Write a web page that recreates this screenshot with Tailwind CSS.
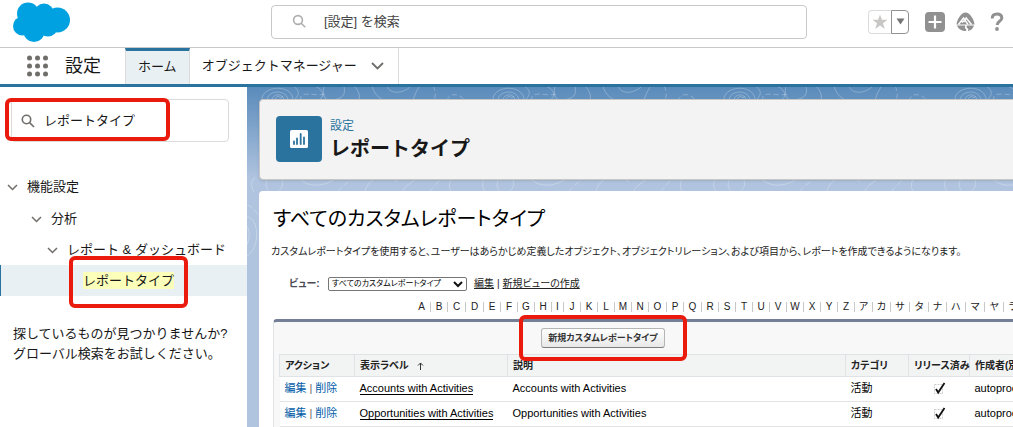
<!DOCTYPE html>
<html lang="ja">
<head>
<meta charset="utf-8">
<meta name="viewport" content="width=device-width, initial-scale=1">
<title>レポートタイプ | Salesforce</title>
<script src="https://cdn.jsdelivr.net/npm/@tailwindcss/browser@4"></script>
</head>
<body class="flex h-screen flex-col overflow-hidden bg-white font-['Liberation_Sans','Noto_Sans_CJK_JP',sans-serif] text-[13px] leading-5 text-[#181818]">

<header class="flex h-12 shrink-0 items-center border-b border-[#c9c9c9]">
  <a href="#" aria-label="Salesforce" class="w-[271px] shrink-0 pl-3">
    <svg class="block" width="60" height="44" viewBox="0 0 60 44" fill="#00a1e0"><circle cx="16" cy="11.500" r="11"/><circle cx="32" cy="11.500" r="10"/><circle cx="45.500" cy="18" r="12.500"/><circle cx="10.500" cy="24" r="9.500"/><circle cx="22" cy="29.500" r="10.500"/><circle cx="36" cy="24.500" r="10"/><path d="M10 12h35v18H14z"/></svg>
  </a>
  <label class="mb-1 flex h-[34px] min-w-0 flex-1 items-center rounded border border-[#c9c9c9] pl-5">
    <svg class="shrink-0" width="15" height="15" viewBox="0 0 15 15" fill="none" stroke="#aeaeae" stroke-width="1.600"><circle cx="6" cy="6" r="4.400"/><path d="M9.200 9.200l4 4"/></svg>
    <input type="search" aria-label="[設定] を検索" placeholder="[設定] を検索" class="ml-[17px] min-w-0 flex-1 bg-transparent outline-none placeholder:text-[#444]">
  </label>
  <div class="mb-1 flex w-[206px] shrink-0 items-center pl-[61px]">
    <button aria-label="お気に入り" class="flex h-6 w-[23px] items-center justify-center rounded-l border border-r-0 border-[#dddbda]"><svg width="16" height="16" viewBox="0 0 16 16" fill="#c9c7c5"><path d="M8 0.500l1.900 5.300h5.600l-4.500 3.500 1.700 5.700L8 11.600 3.300 15 5 9.300 0.500 5.800h5.600z"/></svg></button>
    <button aria-label="お気に入りリスト" class="flex h-6 w-[18px] items-center justify-center rounded-r border border-[#919191]"><svg width="9" height="7" viewBox="0 0 9 7" fill="#747474"><path d="M0.500 0.500h8L4.500 6.500z"/></svg></button>
    <button aria-label="作成" class="ml-4 flex size-5 items-center justify-center rounded bg-[#919191]"><svg width="14" height="14" viewBox="0 0 14 14" stroke="#fff" stroke-width="2.200"><path d="M7 0.500v13M0.500 7h13"/></svg></button>
    <button aria-label="Trailhead" class="ml-[11px]"><svg class="block" width="19" height="20" viewBox="0 0 19 20"><path fill="#919191" d="M9.500 0.500C13.500 0.500 18 7 18.500 12.500H0.500C1 7 5.500 0.500 9.500 0.500z"/><path fill="none" stroke="#fff" stroke-width="1.400" d="M2.500 12.500l5-6.500 4.500 6.500M8.800 8l1.400-2L15.500 12.500M5.500 9l1 1 1-1 1 1"/><path fill="#919191" d="M1 13.500h8.300l-0.500 2.500 1.500 1.500-.300 1.500C6 19 2.500 17.500 1 13.500zM10.800 13.500H18c-1 3-3 5-6 5.500l.300-2-1.800-1.700z"/></svg></button>
    <button aria-label="ヘルプ" class="ml-[15px]"><svg class="block" width="14" height="20" viewBox="0 0 14 20"><path fill="none" stroke="#919191" stroke-width="3" d="M2.200 6.500C2.200 3.500 4.200 2 7 2s4.800 1.500 4.800 4c0 3.500-4.600 3.200-4.600 7"/><circle cx="7" cy="17" r="1.900" fill="#919191"/></svg></button>
  </div>
</header>

<nav class="flex h-[39px] shrink-0 border-b-3 border-[#2a739e]">
  <button aria-label="アプリケーションランチャー" class="ml-[26px] mr-[17px] self-center"><svg class="block" width="22" height="22" viewBox="0 0 22 22" fill="#706e6b"><circle cx="3.500" cy="3" r="2.500"/><circle cx="11.500" cy="3" r="2.500"/><circle cx="19.500" cy="3" r="2.500"/><circle cx="3.500" cy="11" r="2.500"/><circle cx="11.500" cy="11" r="2.500"/><circle cx="19.500" cy="11" r="2.500"/><circle cx="3.500" cy="19" r="2.500"/><circle cx="11.500" cy="19" r="2.500"/><circle cx="19.500" cy="19" r="2.500"/></svg></button>
  <span class="w-[60px] self-center text-lg leading-6">設定</span>
  <a href="#" class="flex items-center border-x border-t-3 border-x-[#dddbda] border-t-[#2a739e] bg-[#e9f0f4] px-3 pb-[2px]">ホーム</a>
  <a href="#" class="flex items-center gap-[14px] border-r border-[#dddbda] pl-3 pr-[14px]">オブジェクトマネージャー
    <svg width="13" height="8" viewBox="0 0 13 8" fill="none" stroke="#706e6b" stroke-width="1.800"><path d="M1 1l5.500 5.500L12 1"/></svg></a>
</nav>

<div class="flex min-h-0 flex-1">
  <aside class="w-[247px] shrink-0 bg-white pt-3">
    <div class="relative ml-[11px] mr-[18px]">
      <label class="flex h-[43px] items-center rounded border border-[#dddbda] pl-[9px]">
        <svg class="shrink-0" width="14" height="14" viewBox="0 0 14 14" fill="none" stroke="#706e6b" stroke-width="1.600"><circle cx="5.500" cy="5.500" r="4.200"/><path d="M8.600 8.600l4.400 4.400"/></svg>
        <input type="text" aria-label="クイック検索" value="レポートタイプ" class="ml-[9px] min-w-0 flex-1 bg-transparent outline-none">
      </label>
      <div class="pointer-events-none absolute -left-[6px] -top-px h-[43px] w-[165px] rounded-md border-4 border-[#ea1b0c]"></div>
    </div>
    <ul class="mt-[29px]">
      <li><button class="flex h-8 items-center gap-[9px] pl-[7px]"><svg width="11" height="7" viewBox="0 0 11 7" fill="none" stroke="#706e6b" stroke-width="1.500"><path d="M1 1l4.500 4.500L10 1"/></svg>機能設定</button></li>
      <li><button class="flex h-8 items-center gap-[9px] pl-[31px]"><svg width="11" height="7" viewBox="0 0 11 7" fill="none" stroke="#706e6b" stroke-width="1.500"><path d="M1 1l4.500 4.500L10 1"/></svg>分析</button></li>
      <li><button class="flex h-[30px] items-center gap-[9px] pl-[47px]"><svg width="11" height="7" viewBox="0 0 11 7" fill="none" stroke="#706e6b" stroke-width="1.500"><path d="M1 1l4.500 4.500L10 1"/></svg>レポート &amp; ダッシュボード</button></li>
      <li class="relative flex h-[31px] items-center border-l border-[#2a739e] bg-[#e9f0f4]"><a href="#" class="ml-[82px] bg-[#fbffb9] leading-[17px]">レポートタイプ</a>
        <div class="pointer-events-none absolute -top-[9px] left-[68px] h-[52px] w-[119px] rounded-md border-4 border-[#ea1b0c]"></div></li>
    </ul>
    <p class="mt-7 pl-[13px]">探しているものが見つかりませんか?<br>グローバル検索をお試しください。</p>
  </aside>

  <main class="relative min-w-0 flex-1 overflow-hidden bg-[#b0c4df] pl-3 pt-3">
    <svg class="absolute left-0 top-0 h-full w-full" aria-hidden="true">
      <defs>
        <linearGradient id="sky" x2="0" y2="1"><stop stop-color="#5a8bbb"/><stop offset="1" stop-color="#b0c4df"/></linearGradient>
        <pattern id="topo" width="231" height="190" patternUnits="userSpaceOnUse">
          <g fill="none" stroke="#fff" stroke-opacity="0.250">
            <path d="M15 14C13-2 47-4 46 14M20 14C20 2 41 2 41 14M25 13c1-7 11-7 12 0M28 12l3-3 3 2 2-2M46-1c8 5 6 10 0 15M67-1c10 3 11 11 5 14M77-1c-2 8 0 16 9 14s13-4 11-14M107-1q7 7 5 14M125-1q2 9 11 14M140-1c3 9 17 8 25-1M172 0q-4 6-6 13"/>
            <path stroke-dasharray="5 3" d="M54 14c-3-12 14-4 25-7M186-1q4 7 1 14M200 14c2-9 13-8 18 0"/>
            <path d="M7 105c-5-9-1-12 1-15M22 105c-6-9-1-12 0-15M30 105c7-4 7-10 3-15M51 90c8 10 23 11 37 2M118 105c2-14 20-20 33-10M155 105c3-7 14-12 16-15M205 105c-5-5-2-12 1-15M-5 130c20-6 19 40 0 40M-5 138c10-4 9 23 0 23"/>
            <path stroke-dasharray="6 3" d="M90 105q10-10 17-15M182 105q7-8 14-15M0 118c12 4 18 19 16 52"/>
          </g>
        </pattern>
      </defs>
      <rect width="100%" height="92" fill="url(#sky)"/>
      <rect width="100%" height="190" fill="url(#topo)"/>
    </svg>

    <div class="relative -mr-2 flex h-[81px] items-center rounded border border-[#c9c7c5] bg-[#f3f3f3] pl-4 shadow">
      <div class="mb-px flex size-[46px] items-center justify-center rounded bg-[#2a739e]">
        <svg width="18" height="18" viewBox="0 0 18 18"><rect width="18" height="18" rx="1.500" fill="#fff"/><path stroke="#2a739e" stroke-width="1.800" stroke-linecap="round" d="M4 11.500v2.500M7 8.500v5.500M10.700 4v10M14 7.500v6.500"/></svg>
      </div>
      <div class="ml-2">
        <p class="pt-px text-[12px] leading-4 text-[#2a739e]">設定</p>
        <h1 class="pt-px text-xl leading-7 font-bold">レポートタイプ</h1>
      </div>
    </div>

    <section class="relative -mr-2 mt-[11px] min-h-full rounded bg-white pl-[14px] text-[11px] leading-4 text-[#222] [font-feature-settings:'palt']">
      <h2 class="pt-3 text-[20px] leading-8 text-black">すべてのカスタムレポートタイプ</h2>
      <p class="-ml-[2px] mt-[9px] whitespace-nowrap text-[10px]">カスタムレポートタイプを使用すると、ユーザーはあらかじめ定義したオブジェクト、オブジェクトリレーション、および項目から、レポートを作成できるようになります。</p>
      <div class="mt-4 flex h-4 items-center pl-4 text-[10px] whitespace-nowrap">
        <label for="view" class="w-[39px] font-bold text-[#4a4a56]">ビュー:</label>
        <div class="relative">
          <select id="view" class="block h-[14px] w-[139px] appearance-none rounded-[2px] border border-[#767676] bg-white pl-[3px] text-[8px] leading-3 text-black [font-feature-settings:'palt']"><option>すべてのカスタムレポートタイプ</option></select>
          <svg class="pointer-events-none absolute right-1 top-1" width="10" height="7" viewBox="0 0 10 7" fill="none" stroke="#111" stroke-width="2"><path d="M1 1l4 4 4-4"/></svg>
        </div>
        <a href="#" class="ml-[7px] underline">編集</a><span class="mx-[3px]">|</span><a href="#" class="underline">新規ビューの作成</a>
      </div>
      <div class="mt-[10px] flex h-[10px] pl-[140px] text-center text-[10px] leading-[10px] [&>a]:shrink-0 [&>a]:border-r [&>a]:border-[#c8c8c8]">
        <a href="#" class="w-[18px]">A</a><a href="#" class="w-[17px]">B</a><a href="#" class="w-[18px]">C</a><a href="#" class="w-[18px]">D</a><a href="#" class="w-[17px]">E</a><a href="#" class="w-[17px]">F</a><a href="#" class="w-[17px]">G</a><a href="#" class="w-[17px]">H</a><a href="#" class="w-[12px]">I</a><a href="#" class="w-[17px]">J</a><a href="#" class="w-[17px]">K</a><a href="#" class="w-[17px]">L</a><a href="#" class="w-[17px]">M</a><a href="#" class="w-[17px]">N</a><a href="#" class="w-[18px]">O</a><a href="#" class="w-[17px]">P</a><a href="#" class="w-[18px]">Q</a><a href="#" class="w-[17px]">R</a><a href="#" class="w-[17px]">S</a><a href="#" class="w-[17px]">T</a><a href="#" class="w-[17px]">U</a><a href="#" class="w-[17px]">V</a><a href="#" class="w-[17px]">W</a><a href="#" class="w-[17px]">X</a><a href="#" class="w-[17px]">Y</a><a href="#" class="w-[17px]">Z</a><a href="#" class="w-[18px]">ア</a><a href="#" class="w-[18px]">カ</a><a href="#" class="w-[19px]">サ</a><a href="#" class="w-[19px]">タ</a><a href="#" class="w-[18px]">ナ</a><a href="#" class="w-[19px]">ハ</a><a href="#" class="w-[19px]">マ</a><a href="#" class="w-[19px]">ヤ</a><a href="#" class="w-[19px]">ラ</a>
      </div>
      <div class="mt-[7px] rounded-tl border-l border-t-3 border-l-[#e0e3e5] border-t-[#747e96] bg-[#f8f8f8] pl-[5px]">
        <div class="flex h-8 items-center pl-[262px]">
          <div class="relative">
            <button class="block h-5 w-[124px] whitespace-nowrap rounded-[3px] border border-[#b5b5b5] border-b-[#7f7f7f] bg-linear-to-b from-white to-[#e8e8e9] text-[9px] leading-4 font-bold text-[#333] [font-feature-settings:'palt']">新規カスタムレポートタイプ</button>
            <div class="pointer-events-none absolute -left-[22px] -top-[13px] h-[46px] w-[168px] rounded-md border-4 border-[#ea1b0c]"></div>
          </div>
        </div>
        <table class="w-full min-w-[860px] table-fixed border-collapse whitespace-nowrap text-left text-black [&_td]:border-b [&_td]:border-[#e3e3e3] [&_td]:px-[5px] [&_td]:pb-[2px] [&_th]:border [&_th]:border-[#e0e3e5] [&_th]:px-[5px] [&_th]:text-[10px] [&_th]:text-[#222]">
          <colgroup><col class="w-[75px]"><col class="w-[153px]"><col class="w-[338px]"><col class="w-[63px]"><col class="w-[61px]"><col></colgroup>
          <thead><tr class="h-[22px] bg-[#f2f3f3]"><th>アクション</th><th><span class="inline-flex items-center gap-2">表示ラベル<svg width="7" height="8" viewBox="0 0 7 8" fill="none" stroke="#333"><path d="M3.500 8V1M1 3.500L3.500 1 6 3.500"/></svg></span></th><th>説明</th><th>カテゴリ</th><th>リリース済み</th><th>作成者(別名)</th></tr></thead>
          <tbody class="bg-white">
            <tr class="h-[25px]"><td><a href="#" class="text-[#015ba7]">編集</a><span class="mx-[3px] text-[#666]">|</span><a href="#" class="text-[#015ba7]">削除</a></td><td><a href="#" class="border-b border-black">Accounts with Activities</a></td><td>Accounts with Activities</td><td>活動</td><td><svg class="mx-auto block" width="13" height="15" viewBox="0 0 13 15" fill="none" role="img" aria-label="オン"><path stroke="#ccc" stroke-dasharray="2 1" d="M1.500 3.500h8v9h-8z"/><path stroke="#111" stroke-width="1.800" d="M3 8l2.200 3.500L11.500 2"/></svg></td><td>autoproc</td></tr>
            <tr class="h-[25px]"><td><a href="#" class="text-[#015ba7]">編集</a><span class="mx-[3px] text-[#666]">|</span><a href="#" class="text-[#015ba7]">削除</a></td><td><a href="#" class="border-b border-black">Opportunities with Activities</a></td><td>Opportunities with Activities</td><td>活動</td><td><svg class="mx-auto block" width="13" height="15" viewBox="0 0 13 15" fill="none" role="img" aria-label="オン"><path stroke="#ccc" stroke-dasharray="2 1" d="M1.500 3.500h8v9h-8z"/><path stroke="#111" stroke-width="1.800" d="M3 8l2.200 3.500L11.500 2"/></svg></td><td>autoproc</td></tr>
          </tbody>
        </table>
      </div>
    </section>
  </main>
</div>
</body>
</html>
